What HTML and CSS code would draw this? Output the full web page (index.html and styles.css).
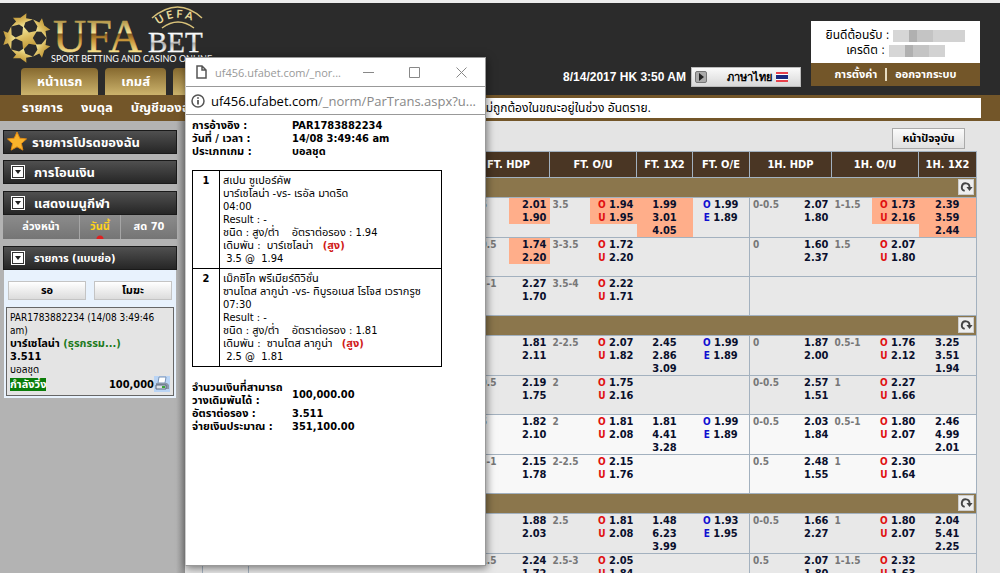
FILE: index.html
```
<!DOCTYPE html>
<html lang="th">

<head>
    <meta charset="UTF-8">
    <meta name="viewport" content="width=device-width, initial-scale=1.0">
    <title>UFABET</title>
    <link rel="stylesheet" href="styles.css">
</head>

<body>
    <svg class="defs" aria-hidden="true">
        <defs>
            <linearGradient id="gold" x1="0" y1="0" x2="0" y2="1">
                <stop offset="0" stop-color="#f7eda0" />
                <stop offset="0.55" stop-color="#d9b95c" />
                <stop offset="1" stop-color="#c29a3a" />
            </linearGradient>
            <linearGradient id="goldText" gradientUnits="userSpaceOnUse" x1="0" y1="16" x2="0" y2="49">
                <stop offset="0" stop-color="#a9893c" />
                <stop offset="0.42" stop-color="#f3e49a" />
                <stop offset="0.46" stop-color="#8a5f1f" />
                <stop offset="0.65" stop-color="#c8963a" />
                <stop offset="1" stop-color="#f5df8c" />
            </linearGradient>
            <linearGradient id="silver" gradientUnits="userSpaceOnUse" x1="0" y1="29" x2="0" y2="49">
                <stop offset="0" stop-color="#ffffff" />
                <stop offset="0.5" stop-color="#dcdcdc" />
                <stop offset="0.55" stop-color="#a8a8a8" />
                <stop offset="1" stop-color="#ffffff" />
            </linearGradient>
            <path id="star" d="M0-10L2.8-3.8 9.5-3.1 4.4 1.5 5.9 8.1 0 4.8-5.9 8.1-4.4 1.5-9.5-3.1-2.8-3.8z" />
            <symbol id="refresh" viewBox="0 0 16 16">
                <path d="M6.500 12.500A4.400 4.400 0 1 1 12 8.500" fill="none" stroke="#444" stroke-width="2.200" />
                <path d="M8.500 8h7l-3.500 4.500z" fill="#444" />
            </symbol>
        </defs>
    </svg>

    <header class="header">
        <div class="brand">
            <svg class="logo" width="210" height="65" viewBox="0 0 210 65" role="img" aria-label="UFABET">
                <g fill="url(#gold)">
                    <use href="#star" transform="translate(27 35) rotate(-18) scale(1.25)" />
                    <use href="#star" transform="translate(27 35) rotate(-18) translate(0 -18) rotate(180) scale(1.2 .7)" />
                    <use href="#star" transform="translate(27 35) rotate(54) translate(0 -18) rotate(180) scale(1.2 .7)" />
                    <use href="#star" transform="translate(27 35) rotate(126) translate(0 -18) rotate(180) scale(1.2 .7)" />
                    <use href="#star" transform="translate(27 35) rotate(198) translate(0 -18) rotate(180) scale(1.2 .7)" />
                    <use href="#star" transform="translate(27 35) rotate(270) translate(0 -18) rotate(180) scale(1.2 .7)" />
                </g>
                <text class="logo-ufa" x="53" y="49" fill="url(#goldText)" stroke="url(#goldText)" stroke-width=".5">UFA</text>
                <text class="logo-bet" x="148" y="49" fill="url(#silver)" stroke="url(#silver)" stroke-width=".3">BET</text>
                <path d="M152 15Q178-7 202 15" fill="none" stroke="#d9c27a" stroke-width="1.500" />
                <path d="M162 25Q178 13 194 25" fill="none" stroke="#d9c27a" stroke-width="1.500" />
                <path id="arc" d="M158 22Q178 7 202 23" fill="none" />
                <text class="logo-arc" fill="#eadb98"><textPath href="#arc">U E F A</textPath></text>
                <text class="logo-tag" x="51" y="59" fill="#fff">SPORT BETTING AND CASINO ONLINE</text>
            </svg>
            <nav class="tabs">
                <a href="#">หน้าแรก</a>
                <a href="#">เกมส์</a>
                <a href="#">&nbsp;</a>
            </nav>
        </div>
        <div class="clock">
            <span>8/14/2017 HK 3:50 AM</span>
            <button class="language" type="button">
                <span class="arrow">
                    <svg width="6" height="8" viewBox="0 0 6 8"><path d="M1 0l5 4-5 4z" fill="#222" /></svg>
                </span>
                <span>ภาษาไทย</span>
                <svg width="12" height="10" viewBox="0 0 12 10">
                    <path d="M0 0h12v10H0z" fill="#e8404a" />
                    <path d="M0 2h12v6H0z" fill="#fff" />
                    <path d="M0 3h12v4H0z" fill="#1c2a80" />
                </svg>
            </button>
        </div>
        <div class="account">
            <div class="account-info">
                <p>ยินดีต้อนรับ : <span class="masked wide"></span></p>
                <p>เครดิต : <span class="masked"></span></p>
            </div>
            <div class="account-links">
                <a href="#">การตั้งค่า</a>
                <a href="#">ออกจากระบบ</a>
            </div>
        </div>
    </header>

    <div class="subnav">
        <nav>
            <a href="#">รายการ</a>
            <a href="#">งบดุล</a>
            <a href="#">บัญชีของฉัน</a>
        </nav>
        <div class="news">ไม่ถูกต้องในขณะอยู่ในช่วง อันตราย.</div>
    </div>

    <div class="page">
        <aside class="sidebar">
            <h2 class="bar favorite">
                <svg width="20" height="20" viewBox="-10 -10 20 20"><use href="#star" fill="#f9b32b" stroke="#e08a14" stroke-width="1" /></svg>
                รายการโปรดของฉัน
            </h2>
            <h2 class="bar"><span class="toggle"></span>การโอนเงิน</h2>
            <div class="group">
                <h2 class="bar"><span class="toggle"></span>แสดงเมนูกีฬา</h2>
                <div class="days">
                    <a href="#">ล่วงหน้า</a>
                    <a class="active" href="#">วันนี้</a>
                    <a href="#">สด 70</a>
                </div>
            </div>
            <div class="group">
                <h2 class="bar small"><span class="toggle"></span>รายการ (แบบย่อ)</h2>
                <div class="bets">
                    <div class="bet-buttons">
                        <button type="button">รอ</button>
                        <button type="button">โมฆะ</button>
                    </div>
                    <div class="bet">
                        <p>PAR1783882234 (14/08 3:49:46 am)</p>
                        <p class="bold">บาร์เซโลน่า <span class="green">(ธุรกรรม...)</span></p>
                        <p class="bold">3.511</p>
                        <p>บอลชุด</p>
                        <div class="bet-total">
                            <span class="running">กำลังวิ่ง</span>
                            <span class="amount">100,000</span>
                            <svg width="16" height="16" viewBox="0 0 16 16">
                                <path d="M0 0h16v16H0z" fill="#b9d4f5" />
                                <path d="M5 1h7l-1 6H4z" fill="#fff" stroke="#7a93b5" />
                                <path d="M2 7h11l2 2v4H2z" fill="#8b98aa" />
                                <path d="M2 9h10v4H2z" fill="#dde3ea" stroke="#5d6b80" />
                                <path d="M8 10h3v2H8z" fill="#3aa53a" />
                            </svg>
                        </div>
                    </div>
                </div>
            </div>
        </aside>

        <main class="main">
            <div class="toolbar"><button type="button">หน้าปัจจุบัน</button></div>
            <table class="odds">
                <colgroup>
                    <col class="c-time">
                    <col class="c-event">
                    <col class="c-hdp">
                    <col class="c-ou">
                    <col class="c-1x2">
                    <col class="c-oe">
                    <col class="c-hdp">
                    <col class="c-ou">
                    <col class="c-h1x2">
                </colgroup>
                <thead>
                    <tr>
                        <th></th>
                        <th></th>
                        <th>FT. HDP</th>
                        <th>FT. O/U</th>
                        <th>FT. 1X2</th>
                        <th>FT. O/E</th>
                        <th>1H. HDP</th>
                        <th>1H. O/U</th>
                        <th>1H. 1X2</th>
                    </tr>
                </thead>
                <tbody>
                    <tr class="league">
                        <td colspan="9"><button type="button" aria-label="Refresh"><svg width="14" height="14"><use href="#refresh" /></svg></button></td>
                    </tr>
                    <tr>
                        <td rowspan="3"></td>
                        <td rowspan="3"></td>
                        <td><div class="cell"><span>0.5</span><b class="hot">2.01<br>1.90</b></div></td>
                        <td><div class="cell"><span>3.5</span><b class="ou hot"><i>O</i> 1.94<br><i>U</i> 1.95</b></div></td>
                        <td class="win hot">1.99<br>3.01<br>4.05</td>
                        <td class="oe"><i>O</i> 1.99<br><i>E</i> 1.89</td>
                        <td class="half"><div class="cell"><span>0-0.5</span><b>2.07<br>1.80</b></div></td>
                        <td><div class="cell"><span>1-1.5</span><b class="ou hot"><i>O</i> 1.73<br><i>U</i> 2.16</b></div></td>
                        <td class="win hot">2.39<br>3.59<br>2.44</td>
                    </tr>
                    <tr>
                        <td><div class="cell"><span>0-0.5</span><b class="hot">1.74<br>2.20</b></div></td>
                        <td><div class="cell"><span>3-3.5</span><b class="ou"><i>O</i> 1.72<br><i>U</i> 2.20</b></div></td>
                        <td></td>
                        <td></td>
                        <td class="half"><div class="cell"><span>0</span><b>1.60<br>2.37</b></div></td>
                        <td><div class="cell"><span>1.5</span><b class="ou"><i>O</i> 2.07<br><i>U</i> 1.80</b></div></td>
                        <td></td>
                    </tr>
                    <tr>
                        <td><div class="cell"><span>0.5-1</span><b>2.27<br>1.70</b></div></td>
                        <td><div class="cell"><span>3.5-4</span><b class="ou"><i>O</i> 2.22<br><i>U</i> 1.71</b></div></td>
                        <td></td>
                        <td></td>
                        <td class="half"></td>
                        <td></td>
                        <td></td>
                    </tr>
                </tbody>
                <tbody>
                    <tr class="league">
                        <td colspan="9"><button type="button" aria-label="Refresh"><svg width="14" height="14"><use href="#refresh" /></svg></button></td>
                    </tr>
                    <tr>
                        <td rowspan="2"></td>
                        <td rowspan="2"></td>
                        <td><div class="cell"><span>0</span><b>1.81<br>2.11</b></div></td>
                        <td><div class="cell"><span>2-2.5</span><b class="ou"><i>O</i> 2.07<br><i>U</i> 1.82</b></div></td>
                        <td class="win">2.45<br>2.86<br>3.09</td>
                        <td class="oe"><i>O</i> 1.99<br><i>E</i> 1.89</td>
                        <td class="half"><div class="cell"><span>0</span><b>1.87<br>2.00</b></div></td>
                        <td><div class="cell"><span>0.5-1</span><b class="ou"><i>O</i> 1.76<br><i>U</i> 2.12</b></div></td>
                        <td class="win">3.25<br>3.51<br>1.94</td>
                    </tr>
                    <tr>
                        <td><div class="cell"><span>0-0.5</span><b>2.19<br>1.75</b></div></td>
                        <td><div class="cell"><span>2</span><b class="ou"><i>O</i> 1.75<br><i>U</i> 2.16</b></div></td>
                        <td></td>
                        <td></td>
                        <td class="half"><div class="cell"><span>0-0.5</span><b>2.57<br>1.51</b></div></td>
                        <td><div class="cell"><span>1</span><b class="ou"><i>O</i> 2.27<br><i>U</i> 1.66</b></div></td>
                        <td></td>
                    </tr>
                    <tr class="alt">
                        <td rowspan="2"></td>
                        <td rowspan="2"></td>
                        <td><div class="cell"><span>0.5</span><b>1.82<br>2.10</b></div></td>
                        <td><div class="cell"><span>2</span><b class="ou"><i>O</i> 1.81<br><i>U</i> 2.08</b></div></td>
                        <td class="win">1.81<br>4.41<br>3.28</td>
                        <td class="oe"><i>O</i> 1.99<br><i>E</i> 1.89</td>
                        <td class="half"><div class="cell"><span>0-0.5</span><b>2.03<br>1.84</b></div></td>
                        <td><div class="cell"><span>0.5-1</span><b class="ou"><i>O</i> 1.80<br><i>U</i> 2.07</b></div></td>
                        <td class="win">2.46<br>4.99<br>2.01</td>
                    </tr>
                    <tr class="alt">
                        <td><div class="cell"><span>0.5-1</span><b>2.15<br>1.78</b></div></td>
                        <td><div class="cell"><span>2-2.5</span><b class="ou"><i>O</i> 2.15<br><i>U</i> 1.76</b></div></td>
                        <td></td>
                        <td></td>
                        <td class="half"><div class="cell"><span>0.5</span><b>2.48<br>1.55</b></div></td>
                        <td><div class="cell"><span>1</span><b class="ou"><i>O</i> 2.30<br><i>U</i> 1.64</b></div></td>
                        <td></td>
                    </tr>
                </tbody>
                <tbody>
                    <tr class="league">
                        <td colspan="9"><button type="button" aria-label="Refresh"><svg width="14" height="14"><use href="#refresh" /></svg></button></td>
                    </tr>
                    <tr>
                        <td rowspan="2"></td>
                        <td rowspan="2"></td>
                        <td><div class="cell"><span>1</span><b>1.88<br>2.03</b></div></td>
                        <td><div class="cell"><span>2.5</span><b class="ou"><i>O</i> 1.81<br><i>U</i> 2.08</b></div></td>
                        <td class="win">1.48<br>6.23<br>3.99</td>
                        <td class="oe"><i>O</i> 1.93<br><i>E</i> 1.95</td>
                        <td class="half"><div class="cell"><span>0-0.5</span><b>1.66<br>2.27</b></div></td>
                        <td><div class="cell"><span>1</span><b class="ou"><i>O</i> 1.80<br><i>U</i> 2.07</b></div></td>
                        <td class="win">2.04<br>5.41<br>2.25</td>
                    </tr>
                    <tr>
                        <td><div class="cell"><span>1-1.5</span><b>2.24<br>1.72</b></div></td>
                        <td><div class="cell"><span>2.5-3</span><b class="ou"><i>O</i> 2.05<br><i>U</i> 1.84</b></div></td>
                        <td></td>
                        <td></td>
                        <td class="half"><div class="cell"><span>0.5</span><b>2.07<br>1.80</b></div></td>
                        <td><div class="cell"><span>1-1.5</span><b class="ou"><i>O</i> 2.32<br><i>U</i> 1.63</b></div></td>
                        <td></td>
                    </tr>
                </tbody>
            </table>
        </main>
    </div>

    <section class="popup">
        <div class="titlebar">
            <svg width="11" height="14" viewBox="0 0 11 14"><path d="M1 1h5l4 4v8H1zM6 1v4h4" fill="none" stroke="#555" stroke-width="1.500" /></svg>
            <span class="title">uf456.ufabet.com/_nor...</span>
            <button type="button" aria-label="Minimize"><svg width="11" height="11"><path d="M0 5.500h11" stroke="#888" /></svg></button>
            <button type="button" aria-label="Maximize"><svg width="11" height="11"><path d="M.5.5h10v10H.5z" fill="none" stroke="#888" /></svg></button>
            <button type="button" aria-label="Close"><svg width="11" height="11"><path d="M.5.5l10 10M10.500.5l-10 10" stroke="#888" /></svg></button>
        </div>
        <div class="address">
            <svg width="14" height="14" viewBox="0 0 14 14">
                <circle cx="7" cy="7" r="6" fill="none" stroke="#555" stroke-width="1.500" />
                <path d="M6.200 3.200h1.600v1.600H6.200zM6.200 6h1.600v4.600H6.200z" fill="#444" />
            </svg>
            <span>uf456.ufabet.com<span class="path">/_norm/ParTrans.aspx?u...</span></span>
        </div>
        <div class="slip">
            <dl>
                <dt>การอ้างอิง :</dt>
                <dd>PAR1783882234</dd>
                <dt>วันที่ / เวลา :</dt>
                <dd>14/08 3:49:46 am</dd>
                <dt>ประเภทเกม :</dt>
                <dd>บอลชุด</dd>
            </dl>
            <table class="matches">
                <tr>
                    <th>1</th>
                    <td>
                        สเปน ซูเปอร์คัพ<br>
                        บาร์เซโลน่า -vs- เรอัล มาดริด<br>
                        04:00<br>
                        Result : -<br>
                        ชนิด : สูง/ต่ำ &nbsp;&nbsp; อัตราต่อรอง : 1.94<br>
                        เดิมพัน : &nbsp;บาร์เซโลน่า &nbsp;&nbsp;<b>(สูง)</b><br>
                        &nbsp;3.5 @ &nbsp;1.94
                    </td>
                </tr>
                <tr>
                    <th>2</th>
                    <td>
                        เม็กซิโก พรีเมียร์ดิวิชั่น<br>
                        ซานโตส ลากูน่า -vs- ทิบูรอเนส โรโจส เวรากรูซ<br>
                        07:30<br>
                        Result : -<br>
                        ชนิด : สูง/ต่ำ &nbsp;&nbsp; อัตราต่อรอง : 1.81<br>
                        เดิมพัน : &nbsp;ซานโตส ลากูน่า &nbsp;&nbsp;<b>(สูง)</b><br>
                        &nbsp;2.5 @ &nbsp;1.81
                    </td>
                </tr>
            </table>
            <dl>
                <dt>จำนวนเงินที่สามารถ<br>วางเดิมพันได้ :</dt>
                <dd>100,000.00</dd>
                <dt>อัตราต่อรอง :</dt>
                <dd>3.511</dd>
                <dt>จ่ายเงินประมาณ :</dt>
                <dd>351,100.00</dd>
            </dl>
        </div>
    </section>
</body>

</html>
```
FILE: styles.css
```
* {
    box-sizing: border-box;
}

body {
    margin: 0;
    font-family: Tahoma, "DejaVu Sans Condensed", "Noto Sans Thai", sans-serif;
    font-size: 11px;
    line-height: 13px;
    color: #000;
    background: #e4e4e4;
    border-top: 3px solid #ececec;
    height: 100vh;
    overflow: hidden;
    position: relative;
}

p,
h2,
dl,
dd {
    margin: 0;
}

a {
    color: inherit;
    text-decoration: none;
}

button {
    font: inherit;
    cursor: pointer;
}

svg {
    display: block;
    flex: none;
}

.defs {
    width: 0;
    height: 0;
    position: absolute;
}

/* header */
.header {
    display: flex;
    background: #2b2b2b;
    height: 92px;
    padding-right: 20px;
}

.brand {
    flex: 1;
    display: flex;
    flex-direction: column;
}

.logo {
    overflow: visible;
}

.logo-ufa {
    font: 46px "Liberation Serif", serif;
}

.logo-bet {
    font: 29px "Liberation Serif", serif;
}

.logo-arc {
    font: bold 11px Lato, sans-serif;
}

.logo-tag {
    font: 9px Lato, sans-serif;
}

.tabs {
    display: flex;
    gap: 7px;
    padding-left: 21px;
}

.tabs a {
    min-width: 59px;
    height: 27px;
    padding: 0 16px;
    line-height: 27px;
    font-size: 13px;
    font-weight: bold;
    color: #fff;
    text-align: center;
    border-radius: 4px 4px 0 0;
    background: linear-gradient(#86692f, #ccb36c);
}

.clock {
    display: flex;
    align-items: center;
    align-self: flex-end;
    gap: 5px;
    margin-bottom: 8px;
    font: bold 12px "Liberation Sans", sans-serif;
    color: #fff;
}

.language {
    display: flex;
    align-items: center;
    gap: 4px;
    width: 110px;
    height: 20px;
    padding: 0 12px 0 3px;
    font: bold 11px "DejaVu Sans Condensed", sans-serif;
    background: linear-gradient(#fafafa, #d8d8d8);
    border: 1px solid #bbb;
}

.language .arrow {
    display: flex;
    align-items: center;
    justify-content: center;
    width: 12px;
    height: 12px;
    margin-right: auto;
    background: #aaa;
    border: 1px solid #777;
    border-radius: 2px;
}

.account {
    width: 169px;
    margin: 18px 0 0 10px;
    align-self: flex-start;
}

.account-info {
    display: flex;
    flex-direction: column;
    align-items: center;
    height: 42px;
    padding-top: 7px;
    background: #fff;
    font-size: 12px;
    line-height: 15px;
}

.account-info p {
    display: flex;
    align-items: center;
    gap: 4px;
}

.masked {
    width: 56px;
    height: 12px;
    background: linear-gradient(90deg, #d6d6d6 0 16px, #b0b0b0 16px 24px, #c4c4c4 24px 40px, #d2d2d2 40px);
}

.masked.wide {
    width: 72px;
}

.account-links {
    display: flex;
    justify-content: center;
    align-items: center;
    height: 23px;
    background: #735629;
    color: #fff;
    font-weight: bold;
}

.account-links a + a {
    margin-left: 8px;
    padding-left: 8px;
    border-left: 2px solid #e8dcc0;
}

.subnav {
    display: flex;
    height: 26px;
    padding: 3px 19px 3px 22px;
    background: #735629;
}

.subnav nav {
    display: flex;
    gap: 18px;
    width: 188px;
    font-size: 13px;
    font-weight: bold;
    line-height: 20px;
    color: #fff;
    white-space: nowrap;
}

.news {
    flex: 1;
    background: #fff;
    padding-left: 272px;
    font-size: 12px;
    line-height: 20px;
}

.page {
    display: flex;
    height: calc(100vh - 121px);
}

/* sidebar */
.sidebar {
    width: 185px;
    flex: none;
    padding: 9px 8px 0 3px;
    background: linear-gradient(90deg, #b3b3b3 176px, #8e8e8e);
}

.bar {
    display: flex;
    align-items: center;
    height: 24px;
    margin-bottom: 6px;
    padding: 0 7px;
    gap: 9px;
    font-size: 13px;
    font-weight: bold;
    color: #fff;
    background: linear-gradient(#505050, #262626);
    border: 1px solid #1a1a1a;
}

.bar.favorite {
    padding-left: 3px;
    gap: 5px;
}

.bar.small {
    font-size: 11px;
}

.toggle {
    display: flex;
    align-items: center;
    justify-content: center;
    width: 14px;
    height: 14px;
    background: #fff;
    border: 1px solid #fff;
    outline: 1px solid #333;
    outline-offset: -2px;
}

.toggle::before {
    content: "";
    border: 3px solid transparent;
    border-top: 4px solid #222;
    border-bottom: 0;
}

.group {
    margin-top: 7px;
}

.group .bar {
    margin-bottom: 0;
}

.days {
    display: flex;
    height: 24px;
    line-height: 24px;
    color: #fff;
    font-weight: bold;
    text-align: center;
    background: linear-gradient(#8c8c8c, #757575);
}

.days a {
    width: 76px;
}

.days a + a {
    flex: 1;
    border-left: 1px solid #a5a5a5;
}

.days a:last-child {
    flex: 1.4;
}

.days .active {
    color: #ffd21c;
    background: radial-gradient(circle at 50% 100%, #d22 3px, transparent 4px);
}

.bets {
    margin: 0 1px;
    padding: 11px 2px 2px;
    background: #e8f2fd;
}

.bet-buttons {
    display: flex;
    gap: 8px;
    padding: 0 2px;
}

.bet-buttons button {
    flex: 1;
    height: 19px;
    padding: 0;
    font-weight: bold;
    background: linear-gradient(#fff, #dcdcdc);
    border: 1px solid #c4c4c4;
}

.bet {
    margin-top: 7px;
    padding: 3px;
    background: #e4e4e4;
    border: 1px solid #666;
    font-size: 10px;
}

.bold {
    font-size: 11px;
    font-weight: bold;
}

.green {
    color: #1c7a1c;
}

.bet-total {
    display: flex;
    align-items: center;
    font-size: 11px;
    font-weight: bold;
}

.running {
    margin-right: auto;
    color: #fff;
    background: #0a7d0a;
}

/* odds table */
.main {
    flex: 1;
    padding: 7px 23px 0 17px;
}

.toolbar {
    display: flex;
    justify-content: flex-end;
    padding: 0 12px 2px 0;
}

.toolbar button {
    width: 73px;
    height: 21px;
    padding: 0;
    font-weight: bold;
    background: linear-gradient(#fbfbfb, #e0e0e0);
    border: 1px solid #aaa;
}

.odds {
    width: 100%;
    table-layout: fixed;
    border-collapse: collapse;
    border: 1px solid #a3b1bf;
    background: #e8e8e8;
    font-weight: bold;
    color: #0a0f2c;
}

.c-time {
    width: 46px;
}

.c-hdp {
    width: 82px;
}

.c-ou {
    width: 87px;
}

.c-1x2 {
    width: 56px;
}

.c-oe {
    width: 57px;
}

.c-h1x2 {
    width: 58px;
}

.odds th {
    height: 26px;
    padding: 0;
    background: #4a3624;
    border: 1px solid #a3b1bf;
    color: #fff;
}

.odds td {
    height: 39px;
    padding: 0;
    vertical-align: top;
    border-bottom: 1px solid #a3b1bf;
}

.odds td[rowspan],
.odds td[rowspan] + td:not([rowspan]),
.odds .half {
    border-left: 1px solid #a3b1bf;
}

.odds .alt td {
    background: #f8f8f8;
}

.odds .league td {
    height: 20px;
    padding: 1px 2px;
    background: #8b764c;
}

.league button {
    display: flex;
    margin-left: auto;
    padding: 0;
    background: #eee;
    border: 1px solid #ccc;
}

.cell {
    display: flex;
    justify-content: space-between;
    padding-left: 3px;
}

.cell span {
    color: #777;
    font-size: 10px;
}

.cell b {
    width: 41px;
    padding-right: 3px;
    text-align: right;
}

.cell b.ou {
    width: 47px;
}

.odds i {
    font-style: normal;
    color: #e01010;
    font-size: 10px;
}

.odds .oe i {
    color: #1010d0;
}

.win,
.oe {
    text-align: center;
}

.odds .hot {
    background: #ffae8a;
}

/* bet slip window */
.popup {
    position: absolute;
    left: 185px;
    top: 54px;
    width: 301px;
    min-height: 509px;
    background: #fff;
    border: 1px solid #999;
    border-left-color: #ccc;
    box-shadow: 1px 2px 8px rgba(0, 0, 0, 0.5);
}

.titlebar {
    display: flex;
    align-items: center;
    height: 29px;
    padding-left: 10px;
    font: 11px "Open Sans", sans-serif;
    color: #999;
    border-bottom: 1px solid #999;
}

.titlebar .title {
    margin: 0 4px 0 8px;
}

.titlebar button {
    flex: 1;
    display: flex;
    justify-content: center;
    padding: 0;
    background: none;
    border: 0;
}

.address {
    display: flex;
    align-items: center;
    gap: 6px;
    height: 28px;
    padding-left: 5px;
    font: 13px "Open Sans", sans-serif;
    white-space: nowrap;
    border-bottom: 1px solid #999;
}

.path {
    color: #888;
}

.slip {
    padding: 4px 6px;
}

.slip dl {
    display: grid;
    grid-template-columns: 100px 1fr;
    align-items: center;
    font-weight: bold;
}

.matches {
    width: 250px;
    margin: 12px 0 14px;
    border-collapse: collapse;
}

.matches th,
.matches td {
    padding: 3px;
    border: 1px solid #000;
    vertical-align: top;
    white-space: nowrap;
}

.matches th {
    width: 27px;
}

.matches b {
    color: #d01818;
}
```
